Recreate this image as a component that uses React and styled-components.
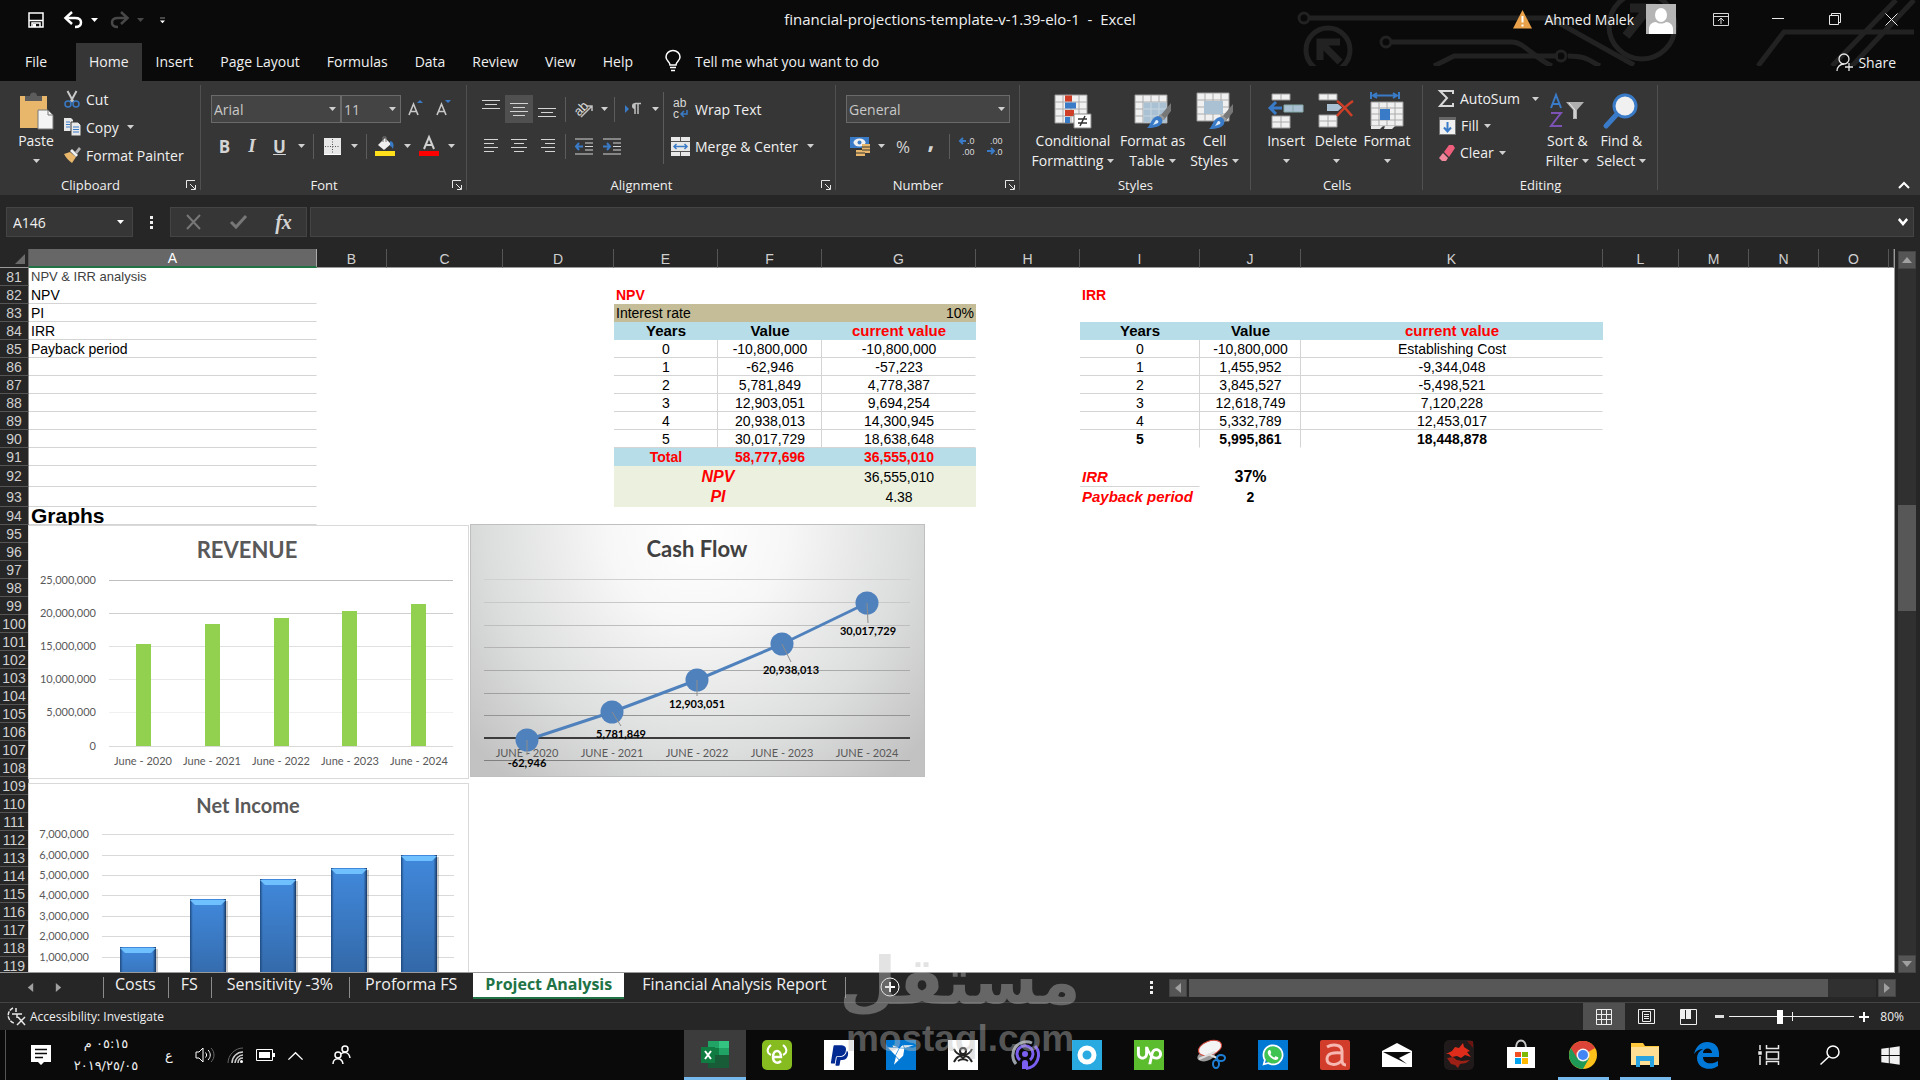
import { useState } from "react";
import styled, { createGlobalStyle } from "styled-components";
import { FaPaypal, FaWhatsapp, FaWindows } from "react-icons/fa";
import { SiFreelancer, SiUpwork } from "react-icons/si";

const GlobalStyle = createGlobalStyle`
  * {
    box-sizing: border-box;
  }
  body {
    margin: 0;
    background: #262626;
    font-family: "Open Sans", "Noto Sans", sans-serif;
    font-size: 14px;
    color: #f0f0f0;
  }
  button, input, select {
    font: inherit;
    color: inherit;
    background: none;
    border: 0;
    padding: 0;
    margin: 0;
  }
  svg {
    display: block;
    flex: none;
    overflow: visible;
  }
`;

const Window = styled.div`
  display: flex;
  flex-direction: column;
  height: 100vh;
  overflow: hidden;
`;

/* ---------- title bar and ribbon tabs ---------- */

const TopArea = styled.header`
  position: relative;
  background: #0a0a0a;
`;

const Circuit = styled.svg`
  position: absolute;
  top: 0;
  right: 0;
  overflow: hidden;
`;

const TitleBar = styled.div`
  position: relative;
  display: grid;
  grid-template-columns: 1fr auto 1fr;
  align-items: center;
  height: 40px;
  padding-bottom: 2px;
`;

const QuickAccess = styled.div`
  display: flex;
  align-items: center;
  padding: 2px 0 0 28px;
`;

const QuickButton = styled.button`
  display: flex;
  align-items: center;
  gap: 8px;
  margin-right: ${(props) => props.$gap || 0}px;
  opacity: ${(props) => (props.disabled ? 0.25 : 1)};
`;

const DocTitle = styled.h1`
  margin: 0;
  font-size: 15px;
  font-weight: 400;
  white-space: pre;
`;

const TitleRight = styled.div`
  display: flex;
  align-items: center;
  justify-content: flex-end;
`;

const UserName = styled.span`
  margin: 0 12px;
`;

const Avatar = styled.div`
  width: 30px;
  height: 30px;
  margin-right: 16px;
  background: #b4b4b4;
`;

const WindowButton = styled.button`
  display: grid;
  place-items: center;
  width: 57px;
  height: 38px;
`;

const TabBar = styled.nav`
  position: relative;
  display: flex;
  gap: 1px;
  height: 41px;
  padding: 3px 24px 0 0;
`;

const RibbonTab = styled.button`
  padding: 0 13px 2px;
  background: ${(props) => (props.$active ? "#363636" : "transparent")};
`;

const FileTab = styled(RibbonTab)`
  width: 75px;
  padding: 0 0 2px 25px;
  text-align: left;
`;

const TellMe = styled.button`
  display: flex;
  align-items: center;
  gap: 14px;
  margin-left: 18px;
  padding-bottom: 2px;
`;

const ShareButton = styled.button`
  display: flex;
  align-items: center;
  gap: 4px;
  margin-left: auto;
`;

/* ---------- ribbon ---------- */

const Ribbon = styled.section`
  display: flex;
  height: 114px;
  background: #363636;
`;

const Group = styled.div`
  display: flex;
  flex-direction: column;
  flex: none;
  width: ${(props) => props.$width}px;
  background: linear-gradient(#505050, #505050) right 4px / 1px 105px no-repeat;
`;

const GroupBody = styled.div`
  display: flex;
  flex: 1;
  padding-left: ${(props) => props.$pad || 0}px;
`;

const GroupFooter = styled.div`
  display: flex;
  align-items: center;
  height: 20px;
  font-size: 13px;
  line-height: 20px;
  text-align: center;
`;

const GroupName = styled.span`
  flex: 1;
`;

const LaunchButton = styled.button`
  display: grid;
  place-items: center;
  width: 20px;
  height: 20px;
`;

const Lines = styled.div`
  display: flex;
  flex-direction: column;
  gap: 9px;
  padding-top: 14px;
`;

const Line = styled.div`
  display: flex;
  align-items: center;
  height: 28px;
`;

const Stack = styled.div`
  display: flex;
  flex-direction: column;
  padding-top: 4px;
`;

const SmallButton = styled.button`
  display: flex;
  align-items: center;
  gap: 5px;
  height: ${(props) => props.$height || 28}px;
  white-space: nowrap;
`;

const ToolButton = styled.button`
  display: flex;
  align-items: center;
  justify-content: center;
  width: ${(props) => props.$width || 28}px;
  height: 28px;
  background: ${(props) => (props.$active ? "#505050" : "transparent")};
`;

const Letter = styled.span`
  font-size: ${(props) => props.$size || 17}px;
  font-weight: ${(props) => props.$weight || 700};
  color: #d4d4d4;
`;

const ItalicLetter = styled(Letter)`
  font-family: "Liberation Serif", serif;
  font-style: italic;
`;

const Comma = styled(Letter)`
  padding-bottom: 12px;
  line-height: 16px;
`;

const Rule = styled.span`
  flex: none;
  width: 1px;
  height: 25px;
  margin: 0 4px;
  background: #5c5c5c;
`;

const TallRule = styled.span`
  flex: none;
  width: 1px;
  height: 72px;
  margin: 11px 7px 0 0;
  background: #5c5c5c;
`;

const BigButton = styled.button`
  display: flex;
  flex-direction: column;
  align-items: center;
  align-self: flex-start;
  width: ${(props) => props.$width}px;
  padding-top: 10px;
  line-height: 20px;
  white-space: nowrap;
`;

const BigIcon = styled.span`
  display: grid;
  place-items: center;
  height: 40px;
`;

const BigLine = styled.span`
  display: flex;
  align-items: center;
  gap: 4px;
  height: 20px;
`;

const ComboBox = styled.label`
  display: grid;
  align-items: center;
  width: ${(props) => props.$width}px;
  height: 28px;
  background: #444;
  border: 1px solid #6a6a6a;
  color: #c8c8c8;

  select {
    grid-area: 1 / 1;
    width: 100%;
    height: 26px;
    padding-left: 2px;
    appearance: none;
    outline: 0;
  }
  svg {
    grid-area: 1 / 1;
    justify-self: end;
    margin-right: 4px;
    pointer-events: none;
  }
`;

const CollapseButton = styled.button`
  align-self: flex-end;
  margin: 0 10px 6px auto;
`;

/* ---------- formula bar ---------- */

const FormulaBar = styled.section`
  display: flex;
  align-items: center;
  height: 54px;
  padding: 0 6px;
`;

const NameBox = styled.label`
  display: flex;
  align-items: center;
  width: 127px;
  height: 30px;
  padding: 0 8px 0 6px;
  background: #363636;
  border: 1px solid #444;

  input {
    flex: 1;
    min-width: 0;
  }
`;

const Dots = styled.span`
  display: flex;
  flex-direction: column;
  gap: 2px;
  margin: 0 ${(props) => props.$space}px;

  i {
    width: 3px;
    height: 3px;
    background: #f0f0f0;
  }
`;

const FormulaButtons = styled.div`
  display: flex;
  align-items: center;
  width: 137px;
  height: 30px;
  margin-right: 3px;
  background: #363636;
  border: 1px solid #444;
`;

const FormulaInput = styled.label`
  display: flex;
  align-items: center;
  flex: 1;
  height: 30px;
  padding-right: 5px;
  background: #363636;
  border: 1px solid #444;

  input {
    flex: 1;
    height: 26px;
  }
`;

/* ---------- sheet ---------- */

const SheetArea = styled.main`
  display: flex;
  flex: 1 1 0;
  min-height: 0;
`;

const Viewport = styled.div`
  position: relative;
  flex: 1;
  overflow: hidden;
  border-bottom: 1px solid #9a9a9a;
  border-right: 1px solid #9a9a9a;
`;

const Grid = styled.table`
  width: 100%;
  table-layout: fixed;
  border-spacing: 0;
  background: #fff;
  font-family: "Liberation Sans", Arial, sans-serif;
  font-size: 14px;
  color: #000;
`;

const ColHead = styled.th`
  height: 19px;
  padding: 1px 0 0;
  font-size: 14px;
  font-weight: 400;
  line-height: 16px;
  color: ${(props) => (props.$selected ? "#fff" : "#d0d0d0")};
  background: ${(props) => (props.$selected ? "#676767" : "#262626")};
  border-right: 1px solid ${(props) => (props.$selected ? "#aaa" : "#555")};
  border-bottom: ${(props) =>
    props.$selected ? "2px solid #217346" : "1px solid #9a9a9a"};
`;

const Corner = styled(ColHead)`
  svg {
    margin-left: 15px;
  }
`;

const RowHead = styled.th`
  height: ${(props) => props.$height}px;
  padding: 0;
  font-weight: 400;
  line-height: 16px;
  color: #d0d0d0;
  background: #262626;
  border-right: 1px solid #8b8b8b;
  border-bottom: 1px solid #555;
`;

const Cell = styled.td`
  padding: 1px 1px 0 2px;
  line-height: 16px;
  white-space: nowrap;
  text-align: ${(props) => props.$align || "left"};
  font-size: ${(props) => props.$size || 14}px;
  font-weight: ${(props) => (props.$bold ? 700 : 400)};
  font-style: ${(props) => (props.$italic ? "italic" : "normal")};
  color: ${(props) => props.$color || "#000"};
  background: ${(props) => props.$fill || "transparent"};
  border-bottom: 1px solid ${(props) => (props.$under ? "#d4d4d4" : "transparent")};
  border-right: 1px solid ${(props) => (props.$side ? "#d4d4d4" : "transparent")};
`;

const Drawing = styled.figure`
  position: absolute;
  left: ${(props) => props.$left}px;
  top: ${(props) => props.$top}px;
  margin: 0;

  text {
    font-family: Lato, "Open Sans", sans-serif;
    font-size: 11px;
    fill: #595959;
  }
  .title {
    font-size: 22px;
    font-weight: 700;
    text-anchor: middle;
  }
  .subtitle {
    font-size: 20px;
    font-weight: 700;
    text-anchor: middle;
  }
  .value {
    text-anchor: end;
  }
  .category {
    text-anchor: middle;
  }
  .point {
    font-weight: 700;
    fill: #000;
    text-anchor: middle;
  }
`;

const VerticalScroll = styled.div`
  display: flex;
  flex-direction: column;
  flex: none;
  width: 25px;
  padding: 2px 4px 0 3px;
`;

const ScrollButton = styled.button`
  display: grid;
  place-items: center;
  width: 18px;
  height: 18px;
  background: #555;
  border: 1px solid #444;
`;

const VerticalTrack = styled.div`
  flex: 1;
  padding-top: 236px;
  background: #303030;
`;

const VerticalThumb = styled.div`
  height: 106px;
  background: #575757;
`;

/* ---------- sheet tabs and status bar ---------- */

const SheetTabs = styled.nav`
  display: flex;
  align-items: flex-start;
  height: 29px;
  padding-right: 24px;
  font-size: 16px;
`;

const TabArrows = styled.div`
  display: flex;
  align-items: center;
  width: 103px;
  height: 29px;
  padding-left: 26px;
  gap: 19px;
`;

const SheetTab = styled.button`
  height: 26px;
  padding: 0 ${(props) => props.$pad || 12}px 3px;
  line-height: 20px;
  white-space: nowrap;
  font-weight: ${(props) => (props.$active ? 700 : 400)};
  color: ${(props) => (props.$active ? "#217346" : "#f0f0f0")};
  background: ${(props) =>
    props.$active
      ? "#fff"
      : props.$line
        ? "linear-gradient(#8b8b8b, #8b8b8b) left 4px / 1px 21px no-repeat"
        : "transparent"};
  border-bottom: 2px solid ${(props) => (props.$active ? "#217346" : "transparent")};
`;

const TabEnd = styled.span`
  width: 1px;
  height: 21px;
  margin: 4px 34px 0 0;
  background: #8b8b8b;
`;

const AddSheet = styled.button`
  margin-top: 4px;
`;

const HorizontalScroll = styled.div`
  display: flex;
  align-items: center;
  gap: 2px;
  width: 760px;
  height: 29px;
  margin-left: auto;
`;

const HorizontalTrack = styled.div`
  flex: 1;
  height: 18px;
  background: #303030;
`;

const HorizontalThumb = styled.div`
  width: 93%;
  height: 18px;
  background: #575757;
`;

const StatusBar = styled.footer`
  display: flex;
  align-items: center;
  height: 28px;
  padding: 0 16px 0 7px;
  border-top: 1px solid #444;
  font-size: 12px;
`;

const StatusButton = styled.button`
  display: flex;
  align-items: center;
  gap: 3px;
  margin-right: auto;
`;

const ViewButton = styled.button`
  display: grid;
  place-items: center;
  width: 42px;
  height: 27px;
  background: ${(props) => (props.$active ? "#505050" : "transparent")};
`;

const ZoomButton = styled.button`
  width: 20px;
  height: 20px;
  display: grid;
  place-items: center;
`;

const ZoomSlider = styled.input`
  width: 125px;
  height: 20px;
  appearance: none;
  background:
    linear-gradient(#f0f0f0, #f0f0f0) 63px center / 1px 9px no-repeat,
    linear-gradient(#f0f0f0, #f0f0f0) center / 100% 1px no-repeat;

  &::-webkit-slider-thumb {
    appearance: none;
    width: 6px;
    height: 14px;
    background: #fff;
  }
`;

const ZoomValue = styled.span`
  margin-left: 6px;
`;

/* ---------- desktop task bar ---------- */

const TaskBar = styled.div`
  display: flex;
  align-items: stretch;
  height: 50px;
  background: #0a0a0a;
`;

const PeekLine = styled.span`
  width: 6px;
  margin-right: 6px;
  border-right: 1px solid #555;
`;

const TrayButton = styled.button`
  display: grid;
  place-items: center;
  flex: none;
  width: ${(props) => props.$width || 30}px;
  margin-left: ${(props) => props.$space || 0}px;
  font-family: "DejaVu Sans", sans-serif;
  font-size: 13px;
`;

const Clock = styled(TrayButton)`
  place-content: center;
  line-height: 22px;
  white-space: nowrap;
`;

const Apps = styled.div`
  display: flex;
  margin-left: auto;
`;

const AppButton = styled.button`
  display: flex;
  justify-content: center;
  align-items: center;
  width: ${(props) => props.$width || 62}px;
  padding-top: 3px;
  background: ${(props) => (props.$active ? "#3c3c3c" : "transparent")};
  border-bottom: 3px solid ${(props) => (props.$active ? "#76b9ed" : "transparent")};
`;

const RunningApp = styled(AppButton)`
  border: 0;
  padding: 0;
  background: linear-gradient(#76b9ed, #76b9ed) center bottom / 51px 3px no-repeat;
`;

const AppTile = styled.span`
  display: grid;
  place-items: center;
  width: 30px;
  height: 30px;
  border-radius: ${(props) => props.$round || 0}px;
  color: ${(props) => props.$color || "#fff"};
  background: ${(props) => props.$fill};
`;

const Watermark = styled.div`
  position: absolute;
  left: 0;
  right: 0;
  bottom: 22px;
  text-align: center;
  font-family: "DejaVu Sans", sans-serif;
  font-weight: 700;
  color: #bebebe;
  opacity: 0.42;
  pointer-events: none;
`;

const WatermarkName = styled.div`
  font-size: 66px;
  line-height: 76px;
`;

const WatermarkSite = styled.div`
  font-family: "Liberation Sans", Arial, sans-serif;
  font-size: 37px;
  line-height: 38px;
`;

/* ---------- icons ---------- */

const Caret = ({ color = "#d0d0d0" }) => (
  <svg width="7" height="4" viewBox="0 0 7 4">
    <path d="M0 0h7L3.5 4z" fill={color} />
  </svg>
);

const Arrow = ({ turn = 0, size = 10, color = "#a0a0a0" }) => (
  <svg width={size} height={size} viewBox="0 0 10 10">
    <path d="M0 8h10L5 2z" fill={color} transform={`rotate(${turn} 5 5)`} />
  </svg>
);

const Chevron = ({ down, width = 12, height = 8, stroke = 2 }) => (
  <svg width={width} height={height} viewBox="0 0 12 8" preserveAspectRatio="none">
    <path
      d={down ? "M1 1l5 5 5-5" : "M1 7l5-5 5 5"}
      fill="none"
      stroke="#fff"
      strokeWidth={stroke}
    />
  </svg>
);

const Launcher = () => (
  <svg width="10" height="10" viewBox="0 0 10 10" fill="none" stroke="#e8e8e8">
    <path d="M.5 8V.5H9M4 4l5 5M9.500 5v4.500H5" />
  </svg>
);

const SaveIcon = () => (
  <svg width="16" height="16" viewBox="0 0 16 16">
    <path d="M1 1h14v14H1z" fill="none" stroke="#fff" strokeWidth="1.500" />
    <path d="M1 8.500h14M4 15v-4h8v4" fill="none" stroke="#fff" strokeWidth="1.500" />
    <path d="M5 12h3v3H5z" fill="#fff" />
  </svg>
);

const UndoIcon = ({ flip }) => (
  <svg width="19" height="16" viewBox="0 0 19 16">
    <g transform={flip ? "translate(19 0) scale(-1 1)" : undefined}>
      <path d="M3 6h8c4 0 6 2 6 4.500S15 15 11 15" fill="none" stroke="#fff" strokeWidth="2.500" />
      <path d="M8 0L1.500 6 8 12" fill="none" stroke="#fff" strokeWidth="2.500" />
    </g>
  </svg>
);

const BulbIcon = () => (
  <svg width="16" height="22" viewBox="0 0 16 22" fill="none" stroke="#fff" strokeWidth="1.500">
    <path d="M5 15c0-3-4-4-4-8a7 6.500 0 0 1 14 0c0 4-4 5-4 8z" />
    <path d="M5 17.500h6M6 20.500h4" />
  </svg>
);

const ShareIcon = () => (
  <svg width="18" height="19" viewBox="0 0 18 19" fill="none" stroke="#e8e8e8" strokeWidth="1.300">
    <circle cx="8" cy="6" r="5" />
    <path d="M1 18c0-4 3-7 7-7M13 10v8M9 14h8" />
  </svg>
);

const CutIcon = () => (
  <svg width="17" height="18" viewBox="0 0 17 18" fill="none">
    <path d="M3.500 1l6 11M12.500 1l-6 11" stroke="#c8c8c8" strokeWidth="2" />
    <circle cx="4" cy="14" r="3" stroke="#3a7bc8" strokeWidth="1.500" />
    <circle cx="12" cy="14" r="3" stroke="#3a7bc8" strokeWidth="1.500" />
  </svg>
);

const CopyIcon = () => (
  <svg width="17" height="18" viewBox="0 0 17 18">
    <path d="M0 0h7l2 2v11H0z" fill="#e8e8e8" />
    <path d="M2 4h4M2 6.500h4M2 9h4" stroke="#3a7bc8" />
    <path d="M7 4h7l3 3v11H7z" fill="#e8e8e8" stroke="#363636" />
    <path d="M9 9h6M9 11.500h6M9 14h6" stroke="#3a7bc8" />
  </svg>
);

const BrushIcon = () => (
  <svg width="17" height="16" viewBox="0 0 17 16">
    <path d="M0 7l6-2 6 5-4 6C5 14 2 11 0 7z" fill="#e8b76b" />
    <path d="M6 4l2-2 6 6-2 2z" fill="#f0f0f0" />
    <path d="M11 5l4-5 2 2-4 5z" fill="#b0b0b0" />
  </svg>
);

const PasteIcon = () => (
  <svg width="36" height="38" viewBox="0 0 36 38">
    <path d="M2 4h27v32H2z" fill="#e8b76b" />
    <path d="M7 9V4h5a3.500 3.500 0 0 1 7 0h5v5z" fill="#5c5c5c" />
    <path d="M20 18h10l5 5v14H20z" fill="#f4f4f4" stroke="#777" />
    <path d="M30 18v5h5" fill="none" stroke="#777" />
  </svg>
);

const FontSizeIcon = ({ down }) => (
  <svg width="18" height="18" viewBox="0 0 18 18">
    <path d="M3 15L7.500 4 12 15M5 11.500h5" fill="none" stroke="#c8c8c8" strokeWidth="1.600" />
    <path d={down ? "M11 0h6l-3 3z" : "M11 3h6l-3-3z"} fill="#3a7bc8" />
  </svg>
);

const BordersIcon = () => (
  <svg width="17" height="17" viewBox="0 0 17 17">
    <path d="M0 0h17v17H0z" fill="#e8e8e8" />
    <path d="M8.500 1v15M1 8.500h15" stroke="#555" strokeDasharray="1 1.500" />
    <path d="M0 16.500h17" stroke="#fff" />
  </svg>
);

const FillIcon = () => (
  <svg width="20" height="20" viewBox="0 0 20 20">
    <path d="M3 9l7-7 6 6-7 6z" fill="#f0f0f0" />
    <path d="M8 6V1h3v5" fill="none" stroke="#777" />
    <path d="M15 5c4 1 4 4 3 8-1-2-2-3-3-3z" fill="#3a7bc8" />
    <path d="M0 15h20v5H0z" fill="#ffe01b" />
  </svg>
);

const FontColorIcon = () => (
  <svg width="20" height="20" viewBox="0 0 20 20">
    <path d="M5 13l5-12 5 12M7 9h6" fill="none" stroke="#d0d0d0" strokeWidth="2" />
    <path d="M0 15h20v5H0z" fill="#f00" />
  </svg>
);

// rows of text: each entry is [start, end, y] of one line on an 18px wide icon
const alignShapes = {
  top: [[0, 18, 1], [3, 15, 5], [0, 18, 9]],
  middle: [[0, 18, 4], [3, 15, 8], [0, 18, 12], [3, 15, 16]],
  bottom: [[0, 18, 9], [3, 15, 13], [0, 18, 17]],
  left: [[2, 16, 3], [2, 12, 7], [2, 16, 11], [2, 12, 15]],
  center: [[1, 17, 3], [4, 14, 7], [1, 17, 11], [4, 14, 15]],
  right: [[3, 17, 3], [7, 17, 7], [3, 17, 11], [7, 17, 15]],
};

const AlignIcon = ({ kind }) => (
  <svg width="18" height="20" viewBox="0 0 18 20" stroke="#d4d4d4">
    {alignShapes[kind].map(([from, to, y]) => (
      <path key={y} d={`M${from} ${y}.5H${to}`} />
    ))}
  </svg>
);

const IndentIcon = ({ out }) => (
  <svg width="18" height="17" viewBox="0 0 18 17" fill="none">
    <path d="M0 1h18M10 5h8M10 8.500h8M10 12h8M0 16h18" stroke="#d4d4d4" />
    <path
      d={out ? "M8 8.500H1M4 5L1 8.500 4 12" : "M0 8.500h7M4 5l3 3.500L4 12"}
      stroke="#3a7bc8"
      strokeWidth="2"
    />
  </svg>
);

const IconText = styled.text`
  font-family: "Liberation Sans", Arial, sans-serif;
  font-size: ${(props) => props.$size}px;
  fill: #d8d8d8;
`;

const OrientationIcon = () => (
  <svg width="20" height="20" viewBox="0 0 20 20">
    <IconText $size={13} x="0" y="14" transform="rotate(-45 7 10)">ab</IconText>
    <path d="M7 18L18 7M18 12V7h-5" fill="none" stroke="#c0c0c0" strokeWidth="1.500" />
  </svg>
);

const DirectionIcon = () => (
  <svg width="18" height="14" viewBox="0 0 18 14">
    <path d="M1 3l4 4-4 4z" fill="#3a7bc8" />
    <path d="M11 12V2M14 12V2M17 1.500h-6" fill="none" stroke="#c0c0c0" strokeWidth="1.500" />
    <path d="M11 1a3 3 0 0 0 0 6z" fill="#c0c0c0" />
  </svg>
);

const WrapIcon = () => (
  <svg width="19" height="22" viewBox="0 0 19 22">
    <IconText $size={12} x="2" y="9">ab</IconText>
    <IconText $size={12} x="2" y="20">c</IconText>
    <path d="M16 12v4h-6M13 13l-3 3 3 3" fill="none" stroke="#3a7bc8" strokeWidth="1.500" />
  </svg>
);

const MergeIcon = () => (
  <svg width="19" height="19" viewBox="0 0 19 19" fill="none">
    <path d="M0 0h19v19H0z" fill="#e8e8e8" />
    <path d="M0 4.500h19M0 14.500h19M9.500 0v4M9.500 15v4" stroke="#555" />
    <path d="M3 9.500h13M5.500 7L3 9.500 5.500 12M13.500 7L16 9.500 13.500 12" stroke="#3a7bc8" strokeWidth="1.500" />
  </svg>
);

const MoneyIcon = () => (
  <svg width="20" height="19" viewBox="0 0 20 19">
    <path d="M0 0h19v11H0z" fill="#3a7bc8" />
    <ellipse cx="9.500" cy="5.500" rx="6" ry="4" fill="#f0f0f0" />
    <circle cx="9.500" cy="5.500" r="2" fill="#3a7bc8" />
    <path d="M12 7h8v9h-5v3H6v-6h6z" fill="#e8b76b" />
    <path d="M12 10h8M12 13h8M6 16h9" stroke="#363636" />
  </svg>
);

const DecimalIcon = ({ less }) => (
  <svg width="18" height="20" viewBox="0 0 18 20">
    <IconText $size={9} x={less ? 3 : 8} y="8">{less ? ".00" : ".0"}</IconText>
    <IconText $size={9} x={less ? 8 : 3} y="19">{less ? ".0" : ".00"}</IconText>
    <path
      d={less ? "M0 15h6M4 12l3 3-3 3" : "M7 5H1M4 2L1 5l3 3"}
      fill="none"
      stroke="#3a7bc8"
      strokeWidth="2"
    />
  </svg>
);

const Sheet = ({ x = 0, y = 0, cols = 4, rows = 4, cw = 8, rh = 7 }) => (
  <g transform={`translate(${x} ${y})`}>
    <path d={`M0 0h${cols * cw}v${rows * rh}H0z`} fill="#f0f0f0" stroke="#999" />
    {Array.from({ length: cols - 1 }, (_, i) => (
      <path key={`c${i}`} d={`M${(i + 1) * cw} 0v${rows * rh}`} stroke="#aaa" />
    ))}
    {Array.from({ length: rows - 1 }, (_, i) => (
      <path key={`r${i}`} d={`M0 ${(i + 1) * rh}h${cols * cw}`} stroke="#aaa" />
    ))}
  </g>
);

const Paintbrush = () => (
  <g>
    <path d="M37 9v8l-7 9-4-4z" fill="#777" />
    <path d="M26 20l5 4-3 3-4-4z" fill="#999" />
    <path d="M24 22c4 1 5 4 4 7s-7 5-15 5c4-3 4-11 11-12z" fill="#3a7bc8" />
    <path d="M22 26c2 0 3 1 2 3l-5 2z" fill="#dcebf7" />
  </g>
);

const ConditionalIcon = () => (
  <svg width="38" height="35" viewBox="0 0 38 35">
    <Sheet x={1} y={1} />
    <path d="M11 1.500h7v6h-7zM11 16h9v6h-9z" fill="#cf3f28" />
    <path d="M11 8.500h11v6H11zM11 23h5v6h-5z" fill="#3a7bc8" />
    <path d="M20 20h17v14H20z" fill="#fff" stroke="#888" />
    <path d="M24 25h9M24 29h9M31 22l-5 10" stroke="#333" strokeWidth="1.500" />
  </svg>
);

const FormatTableIcon = () => (
  <svg width="38" height="35" viewBox="0 0 38 35">
    <Sheet x={1} y={1} />
    <path d="M9.500 8.500h23v20h-23z" fill="#a9c1d3" />
    <path d="M17 8v21M25 8v21M9 15h24M9 22h24" stroke="#c8d6e0" />
    <Paintbrush />
  </svg>
);

const CellStylesIcon = () => (
  <svg width="38" height="38" viewBox="0 -3 38 38">
    <Sheet x={1} y={-2} cols={4} rows={4} />
    <path d="M8 6h19v13H8z" fill="#a9c1d3" />
    <Paintbrush />
  </svg>
);

const InsertIcon = () => (
  <svg width="36" height="36" viewBox="0 0 36 36">
    <Sheet x={4} y={1} cols={2} rows={1} cw={9} rh={6} />
    <Sheet x={4} y={23} cols={2} rows={2} cw={9} rh={6} />
    <path d="M16 12h19v7H16zM25 12v7" fill="#a9c1d3" stroke="#8aa" />
    <path d="M14 15H2M8 9l-6 6 6 6" fill="none" stroke="#3a7bc8" strokeWidth="3" />
  </svg>
);

const DeleteIcon = () => (
  <svg width="36" height="36" viewBox="0 0 36 36">
    <Sheet x={1} y={1} cols={2} rows={1} cw={9} rh={6} />
    <Sheet x={1} y={22} cols={2} rows={2} cw={9} rh={6} />
    <path d="M9 11h11l4 3.500-4 3.500H9z" fill="#a9c1d3" />
    <path d="M19 8c6 4 10 9 15 15M35 8c-6 4-11 9-16 15" stroke="#cf3f28" strokeWidth="2.500" fill="none" />
  </svg>
);

const FormatIcon = () => (
  <svg width="36" height="38" viewBox="0 0 36 38">
    <path d="M2 0v7M30 0v7M4 3.500h24M8 1L4 3.500 8 6M24 1l4 2.500L24 6" fill="none" stroke="#3a7bc8" strokeWidth="2" />
    <Sheet x={2} y={10} cols={4} rows={4} cw={8} rh={6} />
    <path d="M11 17h10v11H11z" fill="#3a7bc8" />
    <path d="M2 34h12l-3 3H2zM16 34h10l-3 3h-8z" fill="#e8e8e8" />
  </svg>
);

const SigmaIcon = () => (
  <svg width="16" height="17" viewBox="0 0 16 17">
    <path d="M14 4V1H1l7 7-7 8h13v-3" fill="none" stroke="#d8d8d8" strokeWidth="2" />
  </svg>
);

const FillDownIcon = () => (
  <svg width="17" height="18" viewBox="0 0 17 18">
    <path d="M.5.500h16v17H.5z" fill="#f0f0f0" stroke="#777" />
    <path d="M0 0h17v3H0z" fill="#666" />
    <path d="M8.500 5v9M5 10.500l3.500 4 3.500-4" fill="none" stroke="#3a7bc8" strokeWidth="2" />
  </svg>
);

const EraserIcon = () => (
  <svg width="16" height="16" viewBox="0 0 16 16">
    <path d="M10 0h4l2 3-6 9-5-5z" fill="#ef5f7c" />
    <path d="M4 8l5 5-2 3H3L0 13z" fill="#f28a9e" />
  </svg>
);

const SortFilterIcon = () => (
  <svg width="36" height="36" viewBox="0 0 36 36" fill="none">
    <path d="M2 15L7 2l5 13M4 11h6" stroke="#3a7bc8" strokeWidth="2" />
    <path d="M2 20h10L2 33h11" stroke="#7d52b5" strokeWidth="2" />
    <path d="M17 9h18l-7 8v9h-4v-9z" fill="#b0b0b0" />
    <path d="M20 10l6 7v8" stroke="#eee" />
  </svg>
);

const FindIcon = () => (
  <svg width="36" height="36" viewBox="0 0 36 36">
    <path d="M3 33l12-13" stroke="#3a7bc8" strokeWidth="5" strokeLinecap="round" />
    <circle cx="22" cy="13" r="11" fill="#f0f0f0" stroke="#3a7bc8" strokeWidth="3" />
  </svg>
);

/* ---------- charts ---------- */

const months = ["2020", "2021", "2022", "2023", "2024"];

const revenueTicks = [
  { label: "25,000,000", y: 56, color: "#bfbfbf" },
  { label: "20,000,000", y: 89, color: "#cfcfcf" },
  { label: "15,000,000", y: 122, color: "#e0e0e0" },
  { label: "10,000,000", y: 155, color: "#e8e8e8" },
  { label: "5,000,000", y: 188, color: "#f0f0f0" },
  { label: "0", y: 222, color: "#d9d9d9" },
];

const revenueTops = [119, 99, 93, 86, 79];

const RevenueChart = () => (
  <svg width="441" height="254" viewBox="0 0 441 254" role="img" aria-label="Revenue by year">
    <rect x="0.500" y="0.500" width="440" height="253" fill="#fff" stroke="#d9d9d9" />
    <text className="title" x="219" y="33">REVENUE</text>
    {revenueTicks.map((tick) => (
      <g key={tick.label}>
        <text className="value" x="68" y={tick.y + 3}>{tick.label}</text>
        <path d={`M81 ${tick.y - 0.5}H425`} stroke={tick.color} />
      </g>
    ))}
    {revenueTops.map((top, i) => (
      <g key={months[i]}>
        <rect x={108 + Math.round(i * 68.75)} y={top} width="15" height={221 - top} fill="#92d050" />
        <text className="category" x={115 + i * 69} y="240">June - {months[i]}</text>
      </g>
    ))}
  </svg>
);

const cashPoints = [
  { value: "-62,946", x: 57, y: 216, lx: 57, ly: 243 },
  { value: "5,781,849", x: 142, y: 188, lx: 151, ly: 214 },
  { value: "12,903,051", x: 227, y: 156, lx: 227, ly: 184 },
  { value: "20,938,013", x: 312, y: 120, lx: 321, ly: 150 },
  { value: "30,017,729", x: 397, y: 79, lx: 398, ly: 111 },
];

const cashLines = [
  [55, "#d0d0d0"],
  [78, "#c8c8c8"],
  [101, "#bebebe"],
  [123, "#b4b4b4"],
  [146, "#aaaaaa"],
  [169, "#a0a0a0"],
  [191, "#949494"],
  [236, "#808080"],
];

const CashFlowChart = () => (
  <svg width="455" height="253" viewBox="0 0 455 253" role="img" aria-label="Cash flow by year">
    <defs>
      <radialGradient id="cashBack" gradientUnits="userSpaceOnUse" cx="227" cy="0" r="300" gradientTransform="translate(227 0) scale(1 1.1) translate(-227 0)">
        <stop offset="0" stopColor="#ffffff" />
        <stop offset="0.300" stopColor="#f7f7f7" />
        <stop offset="0.700" stopColor="#dcdddd" />
        <stop offset="1" stopColor="#c2c2c2" />
      </radialGradient>
    </defs>
    <rect x="0.500" y="0.500" width="454" height="252" fill="url(#cashBack)" stroke="#bfbfbf" />
    <text className="title" x="227" y="33" style={{ fill: "#404040" }}>Cash Flow</text>
    {cashLines.map(([y, color]) => (
      <path key={y} d={`M14 ${y}.5H440`} stroke={color} />
    ))}
    <path d="M14 214H440" stroke="#3c3c3c" strokeWidth="2" />
    {months.map((year, i) => (
      <text key={year} className="category" x={57 + i * 85} y="233">JUNE - {year}</text>
    ))}
    <polyline
      points={cashPoints.map((p) => `${p.x},${p.y}`).join(" ")}
      fill="none"
      stroke="#4f81bd"
      strokeWidth="3"
    />
    {cashPoints.map((p) => (
      <g key={p.value}>
        <circle cx={p.x} cy={p.y} r="11.500" fill="#4f81bd" />
        <path d={`M${p.x} ${p.y}L${p.lx} ${p.ly - 12}`} stroke="#8c8c8c" />
        <text className="point" x={p.lx} y={p.ly}>{p.value}</text>
      </g>
    ))}
  </svg>
);

const incomeTicks = [
  ["7,000,000", 51],
  ["6,000,000", 72],
  ["5,000,000", 92],
  ["4,000,000", 112],
  ["3,000,000", 133],
  ["2,000,000", 153],
  ["1,000,000", 174],
];

const incomeTops = [164, 116, 96, 85, 72];

const NetIncomeChart = () => (
  <svg width="441" height="254" viewBox="0 0 441 254" role="img" aria-label="Net income by year">
    <defs>
      <linearGradient id="incomeBar" x1="0" y1="0" x2="0" y2="1">
        <stop offset="0" stopColor="#4189dc" />
        <stop offset="1" stopColor="#2f5f99" />
      </linearGradient>
      <linearGradient id="incomeSide" x1="0" y1="0" x2="1" y2="0">
        <stop offset="0" stopColor="#1f4a80" />
        <stop offset="0.080" stopColor="#1f4a80" stopOpacity="0" />
        <stop offset="0.900" stopColor="#1f4a80" stopOpacity="0" />
        <stop offset="1" stopColor="#16345c" />
      </linearGradient>
    </defs>
    <rect x="0.500" y="0.500" width="440" height="253" fill="#fff" stroke="#d9d9d9" />
    <text className="subtitle" x="220" y="30">Net Income</text>
    {incomeTicks.map(([label, y]) => (
      <g key={label}>
        <text className="value" x="61" y={y + 4}>{label}</text>
        <path d={`M74 ${y}.5H426`} stroke="#d9d9d9" />
      </g>
    ))}
    {incomeTops.map((top, i) => {
      const x = 92 + Math.round(i * 70.2);
      return (
        <g key={top}>
          <rect x={x + 1} y={top + 2} width="37" height={220 - top} fill="#000" opacity="0.200" />
          <rect x={x} y={top} width="36" height={222 - top} fill="url(#incomeBar)" />
          <rect x={x} y={top} width="36" height={222 - top} fill="url(#incomeSide)" />
          <path d={`M${x} ${top + 1}h36l-5 5H${x + 5}z`} fill="#6ec0ff" />
        </g>
      );
    })}
  </svg>
);

/* ---------- sheet data ---------- */

const columns = [
  ["A", 288], ["B", 70], ["C", 116], ["D", 111], ["E", 104], ["F", 104],
  ["G", 154], ["H", 104], ["I", 120], ["J", 101], ["K", 302], ["L", 76],
  ["M", 70], ["N", 70], ["O", 70],
];

const blue = "#b7dde8";
const tan = "#c4bd97";
const green = "#ebf1de";
const red = "#ff0000";

const head = (text, color) => ({ text, color, fill: blue, bold: true, size: 15, align: "center" });
const num = (text, more) => ({ text, align: "center", under: true, side: true, ...more });
const total = (text) => ({ text, color: red, fill: blue, bold: true, align: "center" });
const result = (text) => ({ text, color: red, fill: green, bold: true, italic: true, size: 16, align: "center", span: 2 });

const npvRows = [
  ["0", "-10,800,000", "-10,800,000"],
  ["1", "-62,946", "-57,223"],
  ["2", "5,781,849", "4,778,387"],
  ["3", "12,903,051", "9,694,254"],
  ["4", "20,938,013", "14,300,945"],
  ["5", "30,017,729", "18,638,648"],
];

const irrRows = [
  ["0", "-10,800,000", "Establishing Cost"],
  ["1", "1,455,952", "-9,344,048"],
  ["2", "3,845,527", "-5,498,521"],
  ["3", "12,618,749", "7,120,228"],
  ["4", "5,332,789", "12,453,017"],
  ["5", "5,995,861", "18,448,878"],
];

const sheet = {
  81: { A: { text: "NPV & IRR analysis", size: 13, color: "#3f3f3f" } },
  82: {
    A: { text: "NPV" },
    E: { text: "NPV", color: red, bold: true },
    I: { text: "IRR", color: red, bold: true },
  },
  83: {
    A: { text: "PI" },
    E: { text: "Interest rate", fill: tan },
    F: { fill: tan },
    G: { text: "10%", fill: tan, align: "right" },
  },
  84: {
    A: { text: "IRR" },
    E: head("Years"),
    F: head("Value"),
    G: head("current value", red),
    I: head("Years"),
    J: head("Value"),
    K: head("current value", red),
  },
  85: { A: { text: "Payback period" } },
  91: { E: total("Total"), F: total("58,777,696"), G: total("36,555,010") },
  92: {
    E: result("NPV"),
    G: { text: "36,555,010", fill: green, align: "center" },
    I: { text: "IRR", color: red, bold: true, italic: true, size: 15, under: true },
    J: { text: "37%", bold: true, size: 16, align: "center" },
  },
  93: {
    E: result("PI"),
    G: { text: "4.38", fill: green, align: "center" },
    I: { text: "Payback period", color: red, bold: true, italic: true, size: 15 },
    J: { text: "2", bold: true, align: "center" },
  },
  94: { A: { text: "Graphs", bold: true, size: 21 } },
};

npvRows.forEach(([year, value, current], i) => {
  const row = (sheet[85 + i] = sheet[85 + i] || {});
  row.E = num(year);
  row.F = num(value);
  row.G = num(current, { side: false });
});

irrRows.forEach(([year, value, current], i) => {
  const row = sheet[85 + i];
  const last = i === 5 ? { bold: true, under: false } : {};
  row.I = num(year, last);
  row.J = num(value, last);
  row.K = num(current, { ...last, side: false });
});

for (let n = 82; n <= 94; n++) {
  sheet[n] = sheet[n] || {};
  sheet[n].A = { ...sheet[n].A, under: true };
}

const rowNumbers = Array.from({ length: 39 }, (_, i) => 81 + i);
const rowHeights = { 92: 21, 93: 20 };

const SheetRow = ({ number }) => {
  const cells = sheet[number] || {};
  const out = [];
  for (let i = 0; i < columns.length; i++) {
    const name = columns[i][0];
    const cell = cells[name] || {};
    out.push(
      <Cell
        key={name}
        colSpan={cell.span}
        $align={cell.align}
        $size={cell.size}
        $bold={cell.bold}
        $italic={cell.italic}
        $color={cell.color}
        $fill={cell.fill}
        $under={cell.under}
        $side={cell.side}
      >
        {cell.text}
      </Cell>
    );
    if (cell.span) i += cell.span - 1;
  }
  return (
    <tr>
      <RowHead scope="row" $height={rowHeights[number] || 18}>{number}</RowHead>
      {out}
      <Cell />
    </tr>
  );
};

const Worksheet = () => (
  <Viewport>
    <Grid>
      <colgroup>
        <col style={{ width: 29 }} />
        {columns.map(([name, width]) => (
          <col key={name} style={{ width }} />
        ))}
        <col />
      </colgroup>
      <thead>
        <tr>
          <Corner aria-label="Select all">
            <svg width="10" height="10" viewBox="0 0 10 10">
              <path d="M10 0v10H0z" fill="#6a6a6a" />
            </svg>
          </Corner>
          {columns.map(([name]) => (
            <ColHead key={name} scope="col" $selected={name === "A"}>{name}</ColHead>
          ))}
          <ColHead />
        </tr>
      </thead>
      <tbody>
        {rowNumbers.map((number) => (
          <SheetRow key={number} number={number} />
        ))}
      </tbody>
    </Grid>
    <Drawing $left={28} $top={276}>
      <RevenueChart />
    </Drawing>
    <Drawing $left={470} $top={275}>
      <CashFlowChart />
    </Drawing>
    <Drawing $left={28} $top={534}>
      <NetIncomeChart />
    </Drawing>
  </Viewport>
);

/* ---------- ribbon parts ---------- */

const RibbonGroup = ({ name, width, pad, launcher, children }) => (
  <Group $width={width}>
    <GroupBody $pad={pad}>{children}</GroupBody>
    <GroupFooter>
      <GroupName>{name}</GroupName>
      {launcher && (
        <LaunchButton aria-label={`${name} settings`}>
          <Launcher />
        </LaunchButton>
      )}
    </GroupFooter>
  </Group>
);

const Big = ({ icon, first, second, width }) => (
  <BigButton $width={width}>
    <BigIcon>{icon}</BigIcon>
    <BigLine>{first}</BigLine>
    <BigLine>
      {second}
      <Caret />
    </BigLine>
  </BigButton>
);

const Combo = ({ label, value, width }) => (
  <ComboBox $width={width}>
    <select aria-label={label} defaultValue={value}>
      <option>{value}</option>
    </select>
    <Caret />
  </ComboBox>
);

const Drop = ({ label, width = 16 }) => (
  <ToolButton $width={width} aria-label={label}>
    <Caret />
  </ToolButton>
);

const ExcelRibbon = () => (
  <Ribbon>
    <RibbonGroup name="Clipboard" width={201} pad={8} launcher>
      <Big icon={<PasteIcon />} first="Paste" width={56} />
      <Stack>
        <SmallButton><CutIcon />Cut</SmallButton>
        <SmallButton><CopyIcon />Copy&nbsp;<Caret /></SmallButton>
        <SmallButton><BrushIcon />Format Painter</SmallButton>
      </Stack>
    </RibbonGroup>

    <RibbonGroup name="Font" width={266} pad={10} launcher>
      <Lines>
        <Line>
          <Combo label="Font" value="Arial" width={130} />
          <Combo label="Font size" value="11" width={60} />
          <ToolButton aria-label="Grow font"><FontSizeIcon /></ToolButton>
          <ToolButton aria-label="Shrink font"><FontSizeIcon down /></ToolButton>
        </Line>
        <Line>
          <ToolButton $width={27}><Letter>B</Letter></ToolButton>
          <ToolButton><ItalicLetter $size={19}>I</ItalicLetter></ToolButton>
          <ToolButton $width={27}><Letter as="u">U</Letter></ToolButton>
          <Drop label="Underline styles" />
          <Rule />
          <ToolButton aria-label="Borders"><BordersIcon /></ToolButton>
          <Drop label="Border styles" />
          <Rule />
          <ToolButton aria-label="Fill color"><FillIcon /></ToolButton>
          <Drop label="Fill colors" />
          <ToolButton aria-label="Font color"><FontColorIcon /></ToolButton>
          <Drop label="Font colors" />
        </Line>
      </Lines>
    </RibbonGroup>

    <RibbonGroup name="Alignment" width={369} pad={10} launcher>
      <Lines>
        <Line>
          <ToolButton aria-label="Top align"><AlignIcon kind="top" /></ToolButton>
          <ToolButton aria-label="Middle align" $active><AlignIcon kind="middle" /></ToolButton>
          <ToolButton aria-label="Bottom align"><AlignIcon kind="bottom" /></ToolButton>
          <Rule />
          <ToolButton aria-label="Orientation"><OrientationIcon /></ToolButton>
          <Drop label="Orientation options" width={12} />
          <Rule />
          <ToolButton aria-label="Text direction"><DirectionIcon /></ToolButton>
          <Drop label="Text direction options" />
        </Line>
        <Line>
          <ToolButton aria-label="Align left"><AlignIcon kind="left" /></ToolButton>
          <ToolButton aria-label="Center"><AlignIcon kind="center" /></ToolButton>
          <ToolButton aria-label="Align right"><AlignIcon kind="right" /></ToolButton>
          <Rule />
          <ToolButton aria-label="Decrease indent"><IndentIcon out /></ToolButton>
          <ToolButton aria-label="Increase indent"><IndentIcon /></ToolButton>
        </Line>
      </Lines>
      <TallRule />
      <Lines>
        <SmallButton><WrapIcon />Wrap Text</SmallButton>
        <SmallButton><MergeIcon />Merge &amp; Center&nbsp;<Caret /></SmallButton>
      </Lines>
    </RibbonGroup>

    <RibbonGroup name="Number" width={184} pad={10} launcher>
      <Lines>
        <Line>
          <Combo label="Number format" value="General" width={164} />
        </Line>
        <Line>
          <ToolButton $width={27} aria-label="Accounting format"><MoneyIcon /></ToolButton>
          <Drop label="Currencies" />
          <ToolButton><Letter $weight={400}>%</Letter></ToolButton>
          <ToolButton><Comma $size={24}>,</Comma></ToolButton>
          <Rule />
          <ToolButton aria-label="Increase decimal"><DecimalIcon /></ToolButton>
          <ToolButton aria-label="Decrease decimal"><DecimalIcon less /></ToolButton>
        </Line>
      </Lines>
    </RibbonGroup>

    <RibbonGroup name="Styles" width={231} pad={10}>
      <Big icon={<ConditionalIcon />} first="Conditional" second="Formatting" width={86} />
      <Big icon={<FormatTableIcon />} first="Format as" second="Table" width={73} />
      <Big icon={<CellStylesIcon />} first="Cell" second="Styles" width={51} />
    </RibbonGroup>

    <RibbonGroup name="Cells" width={172} pad={10}>
      <Big icon={<InsertIcon />} first="Insert" width={50} />
      <Big icon={<DeleteIcon />} first="Delete" width={50} />
      <Big icon={<FormatIcon />} first="Format" width={52} />
    </RibbonGroup>

    <RibbonGroup name="Editing" width={235} pad={16}>
      <Stack>
        <SmallButton $height={27}><SigmaIcon />AutoSum&nbsp;&nbsp;<Caret /></SmallButton>
        <SmallButton $height={27}><FillDownIcon />Fill<Caret /></SmallButton>
        <SmallButton $height={27}><EraserIcon />Clear<Caret /></SmallButton>
      </Stack>
      <Big icon={<SortFilterIcon />} first="Sort &amp;" second="Filter" width={56} />
      <Big icon={<FindIcon />} first="Find &amp;" second="Select" width={52} />
    </RibbonGroup>

    <CollapseButton aria-label="Collapse ribbon">
      <Chevron />
    </CollapseButton>
  </Ribbon>
);

const tabNames = ["Home", "Insert", "Page Layout", "Formulas", "Data", "Review", "View", "Help"];

const TopBars = () => (
  <TopArea>
    <Circuit width="624" height="66" viewBox="0 0 624 66" fill="none" stroke="#222" strokeWidth="5">
      <circle cx="8" cy="18" r="5" strokeWidth="3" />
      <path d="M14 18h240l84 47" />
      <circle cx="32" cy="50" r="22" />
      <path d="M24 60V42h20M26 44l18 18" strokeWidth="7" />
      <circle cx="90" cy="42" r="5" strokeWidth="3" />
      <path d="M96 42h120c12 0 22 16 40 24" />
      <path d="M138 66l20-10h104M272 56c18 0 20 4 32 10" />
      <circle cx="265" cy="56" r="5" strokeWidth="3" />
      <circle cx="346" cy="26" r="33" />
      <path d="M330 36l24-30M334 8h22v24" strokeWidth="9" />
      <path d="M462 66l26-34h130M536 66l64-66M556 66l62-66" />
    </Circuit>
    <TitleBar>
      <QuickAccess>
        <QuickButton aria-label="Save" $gap={20}><SaveIcon /></QuickButton>
        <QuickButton aria-label="Undo" $gap={12}><UndoIcon /><Caret color="#fff" /></QuickButton>
        <QuickButton aria-label="Redo" disabled $gap={16}><UndoIcon flip /><Caret color="#fff" /></QuickButton>
        <QuickButton aria-label="Customize toolbar">
          <svg width="5" height="7" viewBox="0 0 7 8">
            <path d="M0 0h7v1H0zM0 4h7L3.500 8z" fill="#fff" />
          </svg>
        </QuickButton>
      </QuickAccess>
      <DocTitle>{"financial-projections-template-v-1.39-elo-1  -  Excel"}</DocTitle>
      <TitleRight>
        <svg width="19" height="19" viewBox="0 0 19 19">
          <path d="M9.500 0L19 18.500H0z" fill="#e9a14a" />
          <path d="M9.500 6v6.500M9.500 14.500v2" stroke="#fff" strokeWidth="2" />
        </svg>
        <UserName>Ahmed Malek</UserName>
        <Avatar>
          <svg width="30" height="30" viewBox="0 0 30 30" fill="#fff">
            <ellipse cx="15" cy="11" rx="6" ry="7" />
            <path d="M3 30v-5c0-4 3-7 7-7 3 2 7 2 10 0 4 0 7 3 7 7v5z" />
          </svg>
        </Avatar>
        <WindowButton aria-label="Ribbon display options">
          <svg width="16" height="13" viewBox="0 0 16 13" fill="none" stroke="#d8d8d8">
            <path d="M.5.500h15v12H.5zM.5 3.500h15M8 11V5.500M5 8l3-3 3 3" />
          </svg>
        </WindowButton>
        <WindowButton aria-label="Minimize">
          <svg width="12" height="2" viewBox="0 0 12 2"><path d="M0 0h12v1H0z" fill="#e8e8e8" /></svg>
        </WindowButton>
        <WindowButton aria-label="Restore">
          <svg width="12" height="12" viewBox="0 0 12 12" fill="none" stroke="#e8e8e8">
            <path d="M.5 2.500h9v9h-9zM2.500 2.500v-2h9v9h-2" />
          </svg>
        </WindowButton>
        <WindowButton aria-label="Close">
          <svg width="13" height="13" viewBox="0 0 13 13" stroke="#e8e8e8">
            <path d="M.5.500l12 12M12.500.500l-12 12" />
          </svg>
        </WindowButton>
      </TitleRight>
    </TitleBar>
    <TabBar>
      <FileTab>File</FileTab>
      {tabNames.map((name) => (
        <RibbonTab key={name} $active={name === "Home"}>{name}</RibbonTab>
      ))}
      <TellMe><BulbIcon />Tell me what you want to do</TellMe>
      <ShareButton><ShareIcon />Share</ShareButton>
    </TabBar>
  </TopArea>
);

const TaskApps = () => (
  <Apps>
    <AppButton $active aria-label="Excel">
      <svg width="30" height="28" viewBox="0 0 30 28">
        <path d="M8 0h11v7H8z" fill="#21a366" />
        <path d="M19 0h10v7H19z" fill="#33c481" />
        <path d="M8 7h11v7H8z" fill="#107c41" />
        <path d="M19 7h10v7H19z" fill="#21a366" />
        <path d="M8 14h21v13H8z" fill="#185c37" />
        <path d="M1 6h14v16H1z" fill="#107c41" />
        <path d="M5 10l6 8M11 10l-6 8" stroke="#fff" strokeWidth="2" />
      </svg>
    </AppButton>
    <AppButton aria-label="E Toro">
      <AppTile $fill="#86bc1f" $round={5}>
        <svg width="24" height="24" viewBox="0 0 24 24" fill="none" stroke="#fff" strokeWidth="2">
          <path d="M6 2c-5 4-4 8 0 10M18 2c5 4 4 8 0 10" />
          <path d="M8 14h8c0-8-8-8-8 0 0 6 5 7 8 4" strokeWidth="2.500" />
        </svg>
      </AppTile>
    </AppButton>
    <AppButton aria-label="PayPal">
      <AppTile $fill="#fff" $color="#002991"><FaPaypal size={23} /></AppTile>
    </AppButton>
    <AppButton aria-label="Freelancer">
      <AppTile $fill="#0078d4"><SiFreelancer size={26} /></AppTile>
    </AppButton>
    <AppButton aria-label="Guru">
      <AppTile $fill="#fff">
        <svg width="20" height="20" viewBox="0 0 20 20" fill="none" stroke="#222" strokeWidth="2">
          <circle cx="10" cy="6" r="3" />
          <path d="M1 4c2 5 5 6 9 6s7-1 9-6M1 17c3-6 6-7 9-4 3-3 6-2 9 4M5 16c3-2 7-2 10 0" />
        </svg>
      </AppTile>
    </AppButton>
    <AppButton aria-label="Podcasts">
      <svg width="30" height="30" viewBox="0 0 30 30" fill="none" strokeWidth="3">
        <path d="M22 3A13.500 13.500 0 0 0 6 24" stroke="#9aa0a8" />
        <path d="M25 6a13.500 13.500 0 0 1-9 22.500" stroke="#7a5ff0" />
        <path d="M10 20a8 8 0 1 1 10 0" stroke="#7a5ff0" />
        <circle cx="15" cy="14" r="3" fill="#7a5ff0" />
        <path d="M12 29v-6a3 3 0 0 1 6 0v6" fill="#7a5ff0" />
      </svg>
    </AppButton>
    <AppButton aria-label="Okta">
      <AppTile $fill="#29abe2">
        <svg width="20" height="20" viewBox="0 0 20 20">
          <circle cx="10" cy="10" r="7" fill="none" stroke="#fff" strokeWidth="5" />
        </svg>
      </AppTile>
    </AppButton>
    <AppButton aria-label="Upwork">
      <AppTile $fill="#5bbc2e"><SiUpwork size={25} /></AppTile>
    </AppButton>
    <AppButton aria-label="Snipping tool">
      <svg width="30" height="30" viewBox="0 0 30 30" fill="none">
        <ellipse cx="10" cy="16" rx="9" ry="5" fill="#9a9a9a" transform="rotate(-15 10 16)" />
        <ellipse cx="14" cy="8" rx="12" ry="7" fill="#f4f4f4" stroke="#d0463a" transform="rotate(-20 14 8)" />
        <path d="M3 19l16-7M12 14l9 4" stroke="#ddd" strokeWidth="2" />
        <ellipse cx="25" cy="18" rx="4" ry="3" stroke="#1e7fd6" strokeWidth="2" />
        <ellipse cx="20" cy="24" rx="3" ry="4" stroke="#1e7fd6" strokeWidth="2" />
      </svg>
    </AppButton>
    <AppButton aria-label="WhatsApp">
      <AppTile $fill="#0078d4">
        <svg width="24" height="24" viewBox="0 0 24 24">
          <circle cx="12" cy="12" r="9" fill="#3fc351" />
          <FaWhatsapp size={24} />
        </svg>
      </AppTile>
    </AppButton>
    <AppButton aria-label="Babylon">
      <AppTile $fill="#d13c2b" $round={2}>
        <svg width="24" height="26" viewBox="0 0 24 26" fill="none" stroke="#f6b7b0" strokeWidth="3">
          <path d="M4 5c5-3 15-3 15 4v9c0 4 2 5 4 5M19 11c-8-1-15 0-15 6s10 8 15 1" />
        </svg>
      </AppTile>
    </AppButton>
    <AppButton aria-label="Mail">
      <svg width="30" height="24" viewBox="0 0 30 24">
        <path d="M0 8l15-8 15 8v16H0z" fill="#fff" />
        <path d="M1 9h28l-12 6 8 6z" fill="#0a0a0a" />
      </svg>
    </AppButton>
    <AppButton aria-label="Dragon center">
      <AppTile $fill="#201a1a" $round={5}>
        <svg width="28" height="28" viewBox="0 0 28 28" fill="#e02d1b">
          <path d="M1 13l6-3 3-4 4 1 4-5 1 4 6 4-3 1 4 5-6-2-4 3-4-2-5 1-3-3z" />
          <path d="M2 17l6-1 4 3 5 1 8-1-4 3-6 1-2 4-3-3-4-1z" fill="#9c2016" />
          <path d="M22 0h6v7z" fill="#6b1410" />
        </svg>
      </AppTile>
    </AppButton>
    <AppButton aria-label="Store">
      <svg width="30" height="30" viewBox="0 0 30 30">
        <path d="M10 8c0-10 10-10 10 0" fill="none" stroke="#c8c8c8" strokeWidth="2" />
        <path d="M1 7h28v21H1z" fill="#fff" />
        <path d="M9 12h6v5H9z" fill="#f25022" />
        <path d="M16 12h6v5h-6z" fill="#7fba00" />
        <path d="M9 18h6v6H9z" fill="#00a4ef" />
        <path d="M16 18h6v6h-6z" fill="#ffb900" />
      </svg>
    </AppButton>
    <RunningApp aria-label="Chrome">
      <svg width="28" height="28" viewBox="0 0 28 28">
        <circle cx="14" cy="14" r="14" fill="#fbc11a" />
        <path d="M14 14L1.900 7A14 14 0 0 1 26.100 7z" fill="#db4437" />
        <path d="M1.900 7A14 14 0 0 0 14 28l6-10.500L14 14z" fill="#1e9a56" />
        <path d="M14 7h12.100a14 14 0 0 0-24.200 0L8 17z" fill="#db4437" />
        <circle cx="14" cy="14" r="6.500" fill="#f1f1f1" />
        <circle cx="14" cy="14" r="5" fill="#4285f4" />
      </svg>
    </RunningApp>
    <RunningApp aria-label="File explorer">
      <svg width="28" height="24" viewBox="0 0 28 24">
        <path d="M0 0h12l2 3h14v19H0z" fill="#ffc83d" />
        <path d="M0 4h28v18H0z" fill="#ffdf94" />
        <path d="M5 24V13h18v11h-4v-6H9v6z" fill="#2aa4e0" />
      </svg>
    </RunningApp>
    <AppButton aria-label="Edge">
      <svg width="26" height="27" viewBox="0 0 26 27" fill="#0078d7">
        <path d="M0 12C2 4 7 0 13 0c8 0 13 5 12 15H9c0 7 9 8 15 4v5c-9 6-21 2-21-8 0-4 2-7 6-9-3 0-6 1-9 5zm9-1h9c0-6-9-6-9 0z" />
      </svg>
    </AppButton>
    <AppButton aria-label="Task view">
      <svg width="20" height="20" viewBox="0 0 20 20" fill="none" stroke="#e8e8e8" strokeWidth="1.500">
        <path d="M1 0v5M1 11v9M7.500 0v3.500h12V0M7.500 7h12v7h-12zM7.500 20v-3.500h12V20" />
        <path d="M0 7h2v2H0z" fill="#fff" />
      </svg>
    </AppButton>
    <AppButton $width={60} aria-label="Search">
      <svg width="20" height="20" viewBox="0 0 20 20" fill="none" stroke="#fff" strokeWidth="1.500">
        <circle cx="13" cy="7" r="6" />
        <path d="M9 11.500L.5 19.500" />
      </svg>
    </AppButton>
    <AppButton $width={60} aria-label="Start"><FaWindows size={21} /></AppButton>
  </Apps>
);

const Tray = () => (
  <>
    <PeekLine />
    <TrayButton $width={58} aria-label="Notifications">
      <svg width="20" height="20" viewBox="0 0 20 20">
        <path d="M0 0h20v17h-7l-3 3-3-3H0z" fill="#fff" />
        <path d="M4 4.500h12M4 8.500h12M4 12.500h8" stroke="#0a0a0a" strokeWidth="1.500" />
      </svg>
    </TrayButton>
    <Clock $width={72}>
      <span dir="rtl">٠٥:١٥ م</span>
      <span>٢٠١٩/٢٥/٠٥</span>
    </Clock>
    <TrayButton $width={42} $space={6}>ع</TrayButton>
    <TrayButton aria-label="Volume">
      <svg width="20" height="18" viewBox="0 0 20 18" fill="none" stroke="#fff">
        <path d="M1 6h3l4-4v14l-4-4H1z" />
        <path d="M10.500 6.500c1.500 2 1.500 3 0 5M13 4c3 3 3 7 0 10" />
        <path d="M16 2c4 4 4 10 0 14" stroke="#666" />
      </svg>
    </TrayButton>
    <TrayButton aria-label="Wi-Fi">
      <svg width="17" height="17" viewBox="0 0 17 17" fill="none" stroke="#ccc">
        <path d="M1 16C1 8 8 1 16 1" stroke="#666" />
        <path d="M5 16c0-6 5-11 11-11M8 16c0-4 4-8 8-8M11 16c0-3 2-5 5-5" strokeWidth="1.500" />
        <circle cx="14.500" cy="14.500" r="1.500" fill="#fff" stroke="none" />
      </svg>
    </TrayButton>
    <TrayButton aria-label="Battery">
      <svg width="19" height="12" viewBox="0 0 19 12">
        <path d="M.5.500h16v11H.5z" fill="none" stroke="#fff" />
        <path d="M3 3h11v6H3zM17 4h2v4h-2z" fill="#fff" />
      </svg>
    </TrayButton>
    <TrayButton aria-label="Hidden icons">
      <Chevron width={17} height={11} stroke={1} />
    </TrayButton>
    <TrayButton $space={16} aria-label="People">
      <svg width="19" height="20" viewBox="0 0 19 20" fill="none" stroke="#fff" strokeWidth="1.500">
        <circle cx="13" cy="4" r="3" />
        <path d="M9 9c2-2 8-3 9 4" />
        <circle cx="6" cy="10" r="3" />
        <path d="M1 19c0-7 9-7 10 0" />
      </svg>
    </TrayButton>
  </>
);

const App = () => {
  const [zoom, setZoom] = useState(80);

  return (
    <Window>
      <GlobalStyle />
      <TopBars />
      <ExcelRibbon />

      <FormulaBar>
        <NameBox>
          <input aria-label="Name box" defaultValue="A146" />
          <Caret color="#fff" />
        </NameBox>
        <Dots $space={17}><i /><i /><i /></Dots>
        <FormulaButtons>
          <ToolButton $width={45} aria-label="Cancel">
            <svg width="15" height="14" viewBox="0 0 15 14" stroke="#777" strokeWidth="2">
              <path d="M1 0l13 14M14 0L1 14" />
            </svg>
          </ToolButton>
          <ToolButton $width={45} aria-label="Enter">
            <svg width="17" height="14" viewBox="0 0 17 14" fill="none" stroke="#777" strokeWidth="3">
              <path d="M1 7l5 5L16 1" />
            </svg>
          </ToolButton>
          <ToolButton $width={45} aria-label="Insert function">
            <ItalicLetter $size={20}>fx</ItalicLetter>
          </ToolButton>
        </FormulaButtons>
        <FormulaInput>
          <input aria-label="Formula" defaultValue="" />
          <Chevron down width={10} stroke={3} />
        </FormulaInput>
      </FormulaBar>

      <SheetArea>
        <Worksheet />
        <VerticalScroll>
          <ScrollButton aria-label="Scroll up"><Arrow /></ScrollButton>
          <VerticalTrack><VerticalThumb /></VerticalTrack>
          <ScrollButton aria-label="Scroll down"><Arrow turn={180} /></ScrollButton>
        </VerticalScroll>
      </SheetArea>

      <SheetTabs>
        <TabArrows>
          <Arrow turn={-90} size={9} />
          <Arrow turn={90} size={9} />
        </TabArrows>
        <SheetTab $line>Costs</SheetTab>
        <SheetTab $line $pad={13}>FS</SheetTab>
        <SheetTab $line $pad={16}>Sensitivity -3%</SheetTab>
        <SheetTab $line $pad={16}>Proforma FS</SheetTab>
        <SheetTab $active>Project Analysis</SheetTab>
        <SheetTab $pad={18}>Financial Analysis Report</SheetTab>
        <TabEnd />
        <AddSheet aria-label="New sheet">
          <svg width="20" height="20" viewBox="0 0 20 20" fill="none" stroke="#fff">
            <circle cx="10" cy="10" r="9" />
            <path d="M10 5v10M5 10h10" strokeWidth="2" />
          </svg>
        </AddSheet>
        <HorizontalScroll>
          <Dots $space={14}><i /><i /><i /></Dots>
          <ScrollButton aria-label="Scroll left"><Arrow turn={-90} /></ScrollButton>
          <HorizontalTrack><HorizontalThumb /></HorizontalTrack>
          <ScrollButton aria-label="Scroll right"><Arrow turn={90} /></ScrollButton>
        </HorizontalScroll>
      </SheetTabs>

      <StatusBar>
        <StatusButton>
          <svg width="20" height="19" viewBox="0 0 20 19" fill="none" stroke="#e8e8e8" strokeWidth="1.500">
            <path d="M6 1a8 8 0 0 0 1 15" strokeDasharray="4 1" />
            <path d="M9 1v4M5 7h10M10 7v4M11 10l7 8M18 10l-8 8" />
          </svg>
          Accessibility: Investigate
        </StatusButton>
        <ViewButton $active aria-label="Normal view">
          <svg width="16" height="16" viewBox="0 0 16 16" fill="none" stroke="#f0f0f0">
            <path d="M.5.500h15v15H.5zM.5 5.500h15M.5 10.500h15M5.500.500v15M10.500.500v15" />
          </svg>
        </ViewButton>
        <ViewButton aria-label="Page layout view">
          <svg width="17" height="15" viewBox="0 0 17 15" fill="none" stroke="#f0f0f0">
            <path d="M.5.500h16v14H.5zM4.500 2.500h8v10h-8zM6 5.500h5M6 7.500h5M6 9.500h5" />
          </svg>
        </ViewButton>
        <ViewButton aria-label="Page break view">
          <svg width="17" height="16" viewBox="0 0 17 16">
            <path d="M.5.500h16v15H.5z" fill="none" stroke="#f0f0f0" />
            <path d="M1 1h4v9H1zM6 1h5v9H6z" fill="#f0f0f0" />
          </svg>
        </ViewButton>
        <ZoomButton aria-label="Zoom out">
          <svg width="9" height="3" viewBox="0 0 9 3"><path d="M0 0h9v3H0z" fill="#ddd" /></svg>
        </ZoomButton>
        <ZoomSlider
          type="range"
          aria-label="Zoom"
          min="0"
          max="200"
          value={zoom}
          onChange={(e) => setZoom(Number(e.target.value))}
        />
        <ZoomButton aria-label="Zoom in">
          <svg width="10" height="10" viewBox="0 0 10 10"><path d="M0 4h4V0h2v4h4v2H6v4H4V6H0z" fill="#fff" /></svg>
        </ZoomButton>
        <ZoomValue>{zoom}%</ZoomValue>
      </StatusBar>

      <TaskBar>
        <Tray />
        <TaskApps />
      </TaskBar>

      <Watermark>
        <WatermarkName lang="ar">مستقل</WatermarkName>
        <WatermarkSite>mostaql.com</WatermarkSite>
      </Watermark>
    </Window>
  );
};

export default App;
